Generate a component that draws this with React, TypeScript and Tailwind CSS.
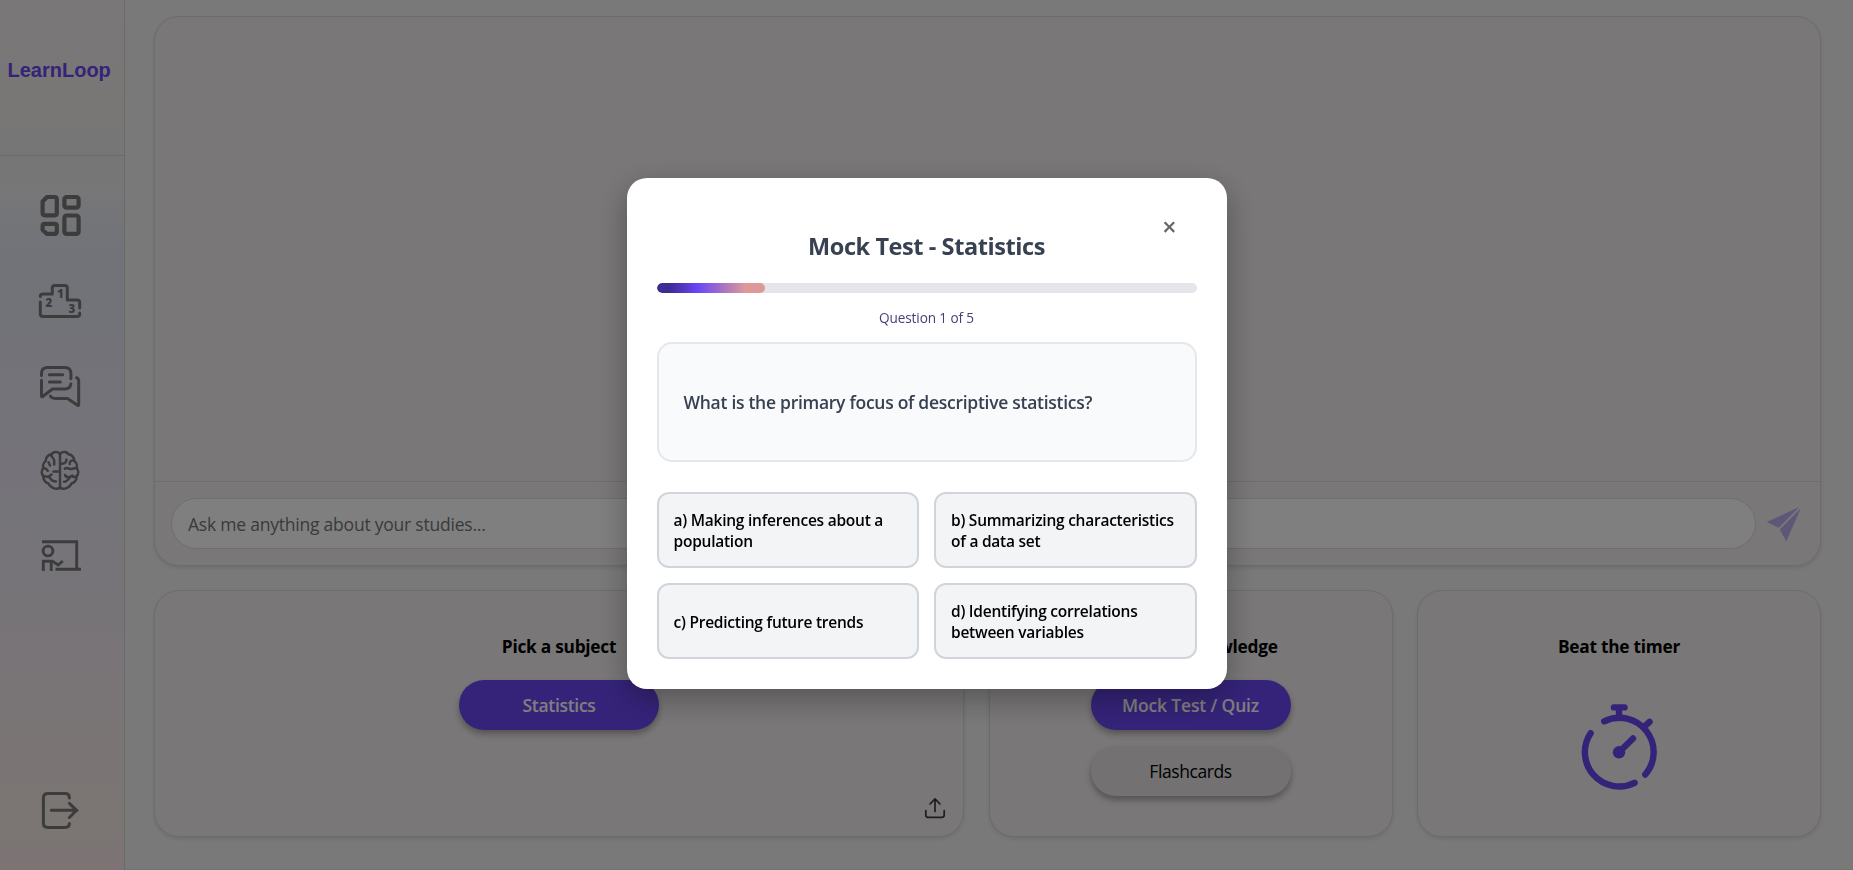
import type { ReactNode } from "react";

const navIcon = "block h-12 w-12 shrink-0 fill-none stroke-[#787878]";

function DashboardIcon() {
  return (
    <svg viewBox="0 0 48 48" className={navIcon} strokeWidth="4.2" strokeLinejoin="round">
      <path d="M11 5H18.5Q20.8 5 20.8 7.3V21Q20.8 23.3 18.5 23.3H9Q6.6 23.3 6.6 21V9.5Z" />
      <rect x="28.4" y="5" width="14.2" height="10.6" rx="2.2" />
      <rect x="28.4" y="23.5" width="14.2" height="18.4" rx="2.2" />
      <path d="M8.8 31.8H18.5Q20.8 31.8 20.8 34V39.6Q20.8 41.9 18.5 41.9H11L6.6 38V34Q6.6 31.8 8.8 31.8Z" />
    </svg>
  );
}

function PodiumIcon() {
  return (
    <svg viewBox="0 0 48 48" className={navIcon} strokeWidth="3" strokeLinecap="round" strokeLinejoin="round">
      <path d="M4.3 16.5Q4.3 14 7 14H16.3V8Q16.3 5.4 19 5.4H29Q31.3 5.4 31.3 8V20H41Q43.7 20 43.7 22.5V28" />
      <path d="M43.7 33V34Q43.7 36.6 41.2 36.6H7Q4.3 36.6 4.3 34V22" />
      <g className="fill-[#787878] font-['Open_Sans',sans-serif] font-extrabold" stroke="none" fontSize="11.5" textAnchor="middle">
        <text x="24.3" y="18.3">1</text>
        <text x="12.8" y="26.8">2</text>
        <text x="35.8" y="33">3</text>
      </g>
    </svg>
  );
}

function ChatIcon() {
  return (
    <svg viewBox="0 0 48 48" className={navIcon} strokeWidth="3" strokeLinecap="round" strokeLinejoin="round">
      <path d="M5.5 13.5V11.5Q5.5 5.500 11.500 5.500H29Q34.900 5.500 34.900 11.500V16.800" />
      <path d="M34.900 22Q34 27 29 27H16.500L6.300 34.700Q5.500 35 5.500 34V18.300" />
      <path d="M13.400 12.700H26.700M13.400 20H24.300" />
      <path d="M40.500 15.700Q42.700 16.500 42.700 19V42.500Q42.700 44 41.500 43.200L31.500 36.400H19.500Q15.500 36.400 14.400 34" />
    </svg>
  );
}

function BrainIcon() {
  return (
    <svg viewBox="0 0 48 48" className={navIcon} strokeWidth="2.500" strokeLinecap="round" strokeLinejoin="round">
      <path d="M24 5.500V40" />
      <path d="M24 5.800C21.500 3.300 17 3.500 15.800 6.300C12.500 6.300 9.500 9.500 9.700 13C7.200 15 6.500 18 7.600 20C5.200 22 5 26 7.400 28C7 32 9.500 35 12.500 35.400C14 39.500 20.500 42.500 24 39.500" />
      <path d="M24 5.800C26.500 3.300 31 3.500 32.200 6.300C35.500 6.300 38.500 9.500 38.300 13C40.800 15 41.500 18 40.400 20C42.800 22 43 26 40.600 28C41 32 38.500 35 35.500 35.400C34 39.500 27.500 42.500 24 39.500" />
      <path d="M15.200 7C15.500 9.500 18 10 18.200 12.500V16.500M12.500 14.300L14 17.500M8 20C10 20.500 11 21.500 11.800 22.800M17.500 23.500H24M7.500 28C10.500 29 14 28.500 15.500 26.500M15 31.500C16.500 33.300 18 33.300 20 33.500M12.500 28.500L15.200 31.500" />
      <path d="M24.500 15.800C28.500 16 30.700 14.500 30.500 11.500M36.500 12.500C34 12.800 33.500 14.500 33.800 16M28.800 20.700C31 18.800 33 21.500 35.500 21C37.500 20.800 38.500 20 40.400 20M29 27C30 30 34 29.500 36.500 27.500M28 33.800C31.500 34.300 31.500 30.800 33.500 30.300M36 28.300C37.500 29.500 39 29 40.600 28" />
    </svg>
  );
}

function TeachingIcon() {
  return (
    <svg viewBox="0 0 48 48" className={navIcon} strokeWidth="2.900">
      <path d="M6 5.700H40.700V33.300M19.500 33.300H45" />
      <circle cx="12" cy="15" r="4.900" />
      <path d="M7.300 35V25.200H16.500L22.200 29L26.800 25M15.200 35V25.200" strokeLinejoin="miter" />
    </svg>
  );
}

function LogoutIcon() {
  return (
    <svg viewBox="0 0 48 48" className={navIcon} strokeWidth="3" strokeLinecap="round" strokeLinejoin="round">
      <path d="M33.400 10Q33.400 5.600 29 5.600H12Q7.400 5.600 7.400 10V35Q7.400 39.400 12 39.400H29Q33.400 39.400 33.400 35.500" />
      <path d="M15.300 22.300H41M33.400 15.300L40.600 22.300L33.400 29.500" />
    </svg>
  );
}

function TimerIcon() {
  return (
    <svg viewBox="0 0 80 92" className="block h-[92px] w-20 fill-none stroke-[#6b47f2]" strokeWidth="6.400" strokeLinecap="round">
      <path d="M25.200 19.300A34.300 34.300 0 0 1 66.300 72.500" />
      <path d="M55.600 80.800A34.300 34.300 0 0 1 11.600 31.200" />
      <path d="M35 5.400H45.500M40 5.400V16M65 25L70.500 19.800M40 50.300L54 36.500" />
      <circle cx="40" cy="50.300" r="6.200" className="fill-[#6b47f2]" stroke="none" />
    </svg>
  );
}

function SendIcon() {
  return (
    <svg viewBox="0 0 36 36" className="block h-9 w-9 fill-[#6b47f2] opacity-[.38]">
      <path d="M.700 16L33 1.300L12.700 21.700ZM34.800 2.300L20.300 35.300L13.700 23.500Z" />
    </svg>
  );
}

function UploadIcon() {
  return (
    <svg viewBox="0 0 24 24" className="block h-6 w-6 fill-none stroke-[#3c3c3c]" strokeWidth="1.700" strokeLinecap="round" strokeLinejoin="round">
      <path d="M2.800 14.500V19Q2.800 21.300 5 21.300H19Q21.200 21.300 21.200 19V14.500M12 15.500V3M7 8L12 2.800L17 8" />
    </svg>
  );
}

function Panel({ title, width, children }: { title: string; width: string; children: ReactNode }) {
  return (
    <section
      className={`${width} relative flex h-[247px] shrink-0 flex-col items-center rounded-[25px] border border-[#dbd6d6] bg-[#f2eeee] pt-[43px] shadow-[0_2px_4px_rgba(0,0,0,0.1)]`}
    >
      <h2 className="text-[17.3px] leading-[26px] font-bold tracking-[-0.25px] whitespace-nowrap">{title}</h2>
      {children}
    </section>
  );
}

const pill = "h-[50px] w-[200px] shrink-0 rounded-[25px] text-[17.5px] shadow-[0_4px_6px_rgba(0,0,0,0.3)]";

const answers = [
  "a) Making inferences about a population",
  "b) Summarizing characteristics of a data set",
  "c) Predicting future trends",
  "d) Identifying correlations between variables",
];

export default function App() {
  return (
    <div className="flex h-[870px] w-full overflow-hidden bg-[#f3f3f3] font-['Open_Sans',sans-serif] text-black">
      <aside className="flex w-[125px] shrink-0 flex-col border-r border-[#d8d2d2] bg-[linear-gradient(180deg,#f3eeee_0px,#f2eded_120px,#ebecec_150px,#efedf0_190px,#e2e7f2_250px,#e5e5f3_320px,#e9e6f4_420px,#ece9f1_560px,#f1e8ef_660px,#f5eae9_740px,#f6ebe9_830px,#fae6e9_870px)]">
        <div className="flex h-[156px] shrink-0 items-center border-b border-[#d6d4d4] pb-[15px] pl-[7.5px] font-['Liberation_Sans',sans-serif] text-[20px] font-bold text-[#6b47f2]">
          LearnLoop
        </div>
        <nav className="flex grow flex-col pt-9 pb-[34px] pl-9">
          <DashboardIcon />
          <div className="mt-10"><PodiumIcon /></div>
          <div className="mt-[34px]"><ChatIcon /></div>
          <div className="mt-[38px]"><BrainIcon /></div>
          <div className="mt-10"><TeachingIcon /></div>
          <div className="mt-auto"><LogoutIcon /></div>
        </nav>
      </aside>

      <main className="flex grow flex-col border-b border-[#e2e2e2] pt-4 pl-[29px]">
        <section className="flex h-[550px] w-[1667px] flex-col rounded-[25px] border border-[#dbd6d6] bg-[#f2eeee] shadow-[0_2px_4px_rgba(0,0,0,0.1)]">
          <div className="grow" />
          <div className="flex h-[84px] items-center gap-2.5 border-t border-[#ddd8d8] px-4">
            <input
              className="h-[51px] w-[1585px] rounded-full border border-[#dcdcdc] bg-white pl-4 text-[17.5px] tracking-[-0.22px] placeholder:text-[#757575]"
              placeholder="Ask me anything about your studies..."
            />
            <SendIcon />
          </div>
        </section>

        <div className="mt-6 flex w-[1667px] justify-between">
          <Panel title="Pick a subject" width="w-[810px]">
            <button className={`${pill} mt-5 bg-[#6b47f2] font-semibold tracking-[-0.3px] text-white`}>Statistics</button>
            <div className="absolute right-4 bottom-4"><UploadIcon /></div>
          </Panel>
          <Panel title="Test your knowledge" width="w-[404px]">
            <button className={`${pill} mt-5 bg-[#6b47f2] font-semibold tracking-[-0.15px] text-white`}>Mock Test / Quiz</button>
            <button className={`${pill} mt-4 bg-[#e6e3e3] tracking-[-0.42px]`}>Flashcards</button>
          </Panel>
          <Panel title="Beat the timer" width="w-[404px]">
            <div className="mt-[42px]"><TimerIcon /></div>
          </Panel>
        </div>
      </main>

      <div className="fixed inset-0 flex justify-center bg-black/50 pt-[178px]">
        <div
          role="dialog"
          className="relative flex h-[511px] w-[600px] flex-col rounded-[20px] bg-white px-[30px] pt-[50px] shadow-[0_10px_30px_rgba(0,0,0,0.3)]"
        >
          <button className="absolute top-[36px] right-[45px] flex h-6 w-6 items-center justify-center text-[25px] leading-6 font-semibold text-[#666666]">
            ×
          </button>
          <h1 className="text-center text-[23.5px] leading-9 font-bold tracking-[-0.42px] text-[#374151]">Mock Test - Statistics</h1>
          <div className="mt-[19px] h-2.5 shrink-0 overflow-hidden rounded-full bg-[#e5e5ea]">
            <div className="h-full w-1/5 rounded-full bg-[linear-gradient(90deg,#3f2b96_12%,#6b47f5_38%,#dd9999_82%)]" />
          </div>
          <p className="mt-[15px] text-center text-[13.6px] leading-5 tracking-[-0.12px] text-[#483d78]">Question 1 of 5</p>
          <div className="mt-[14px] flex h-[120px] shrink-0 items-center rounded-[15px] border-2 border-[#e5e7eb] bg-[#f8fafc] px-[25px] text-[17.5px] font-semibold tracking-[-0.28px] text-[#374151]">
            What is the primary focus of descriptive statistics?
          </div>
          <div className="mt-[30px] grid grid-cols-2 gap-[15px]">
            {answers.map((a) => (
              <button
                key={a}
                className="flex h-[76px] items-center rounded-xl border-2 border-[#d1d5db] bg-[#f3f4f6] px-[15px] pt-[2px] text-left text-[15.5px] leading-[21px] font-semibold tracking-[-0.24px]"
              >
                {a}
              </button>
            ))}
          </div>
        </div>
      </div>
    </div>
  );
}
